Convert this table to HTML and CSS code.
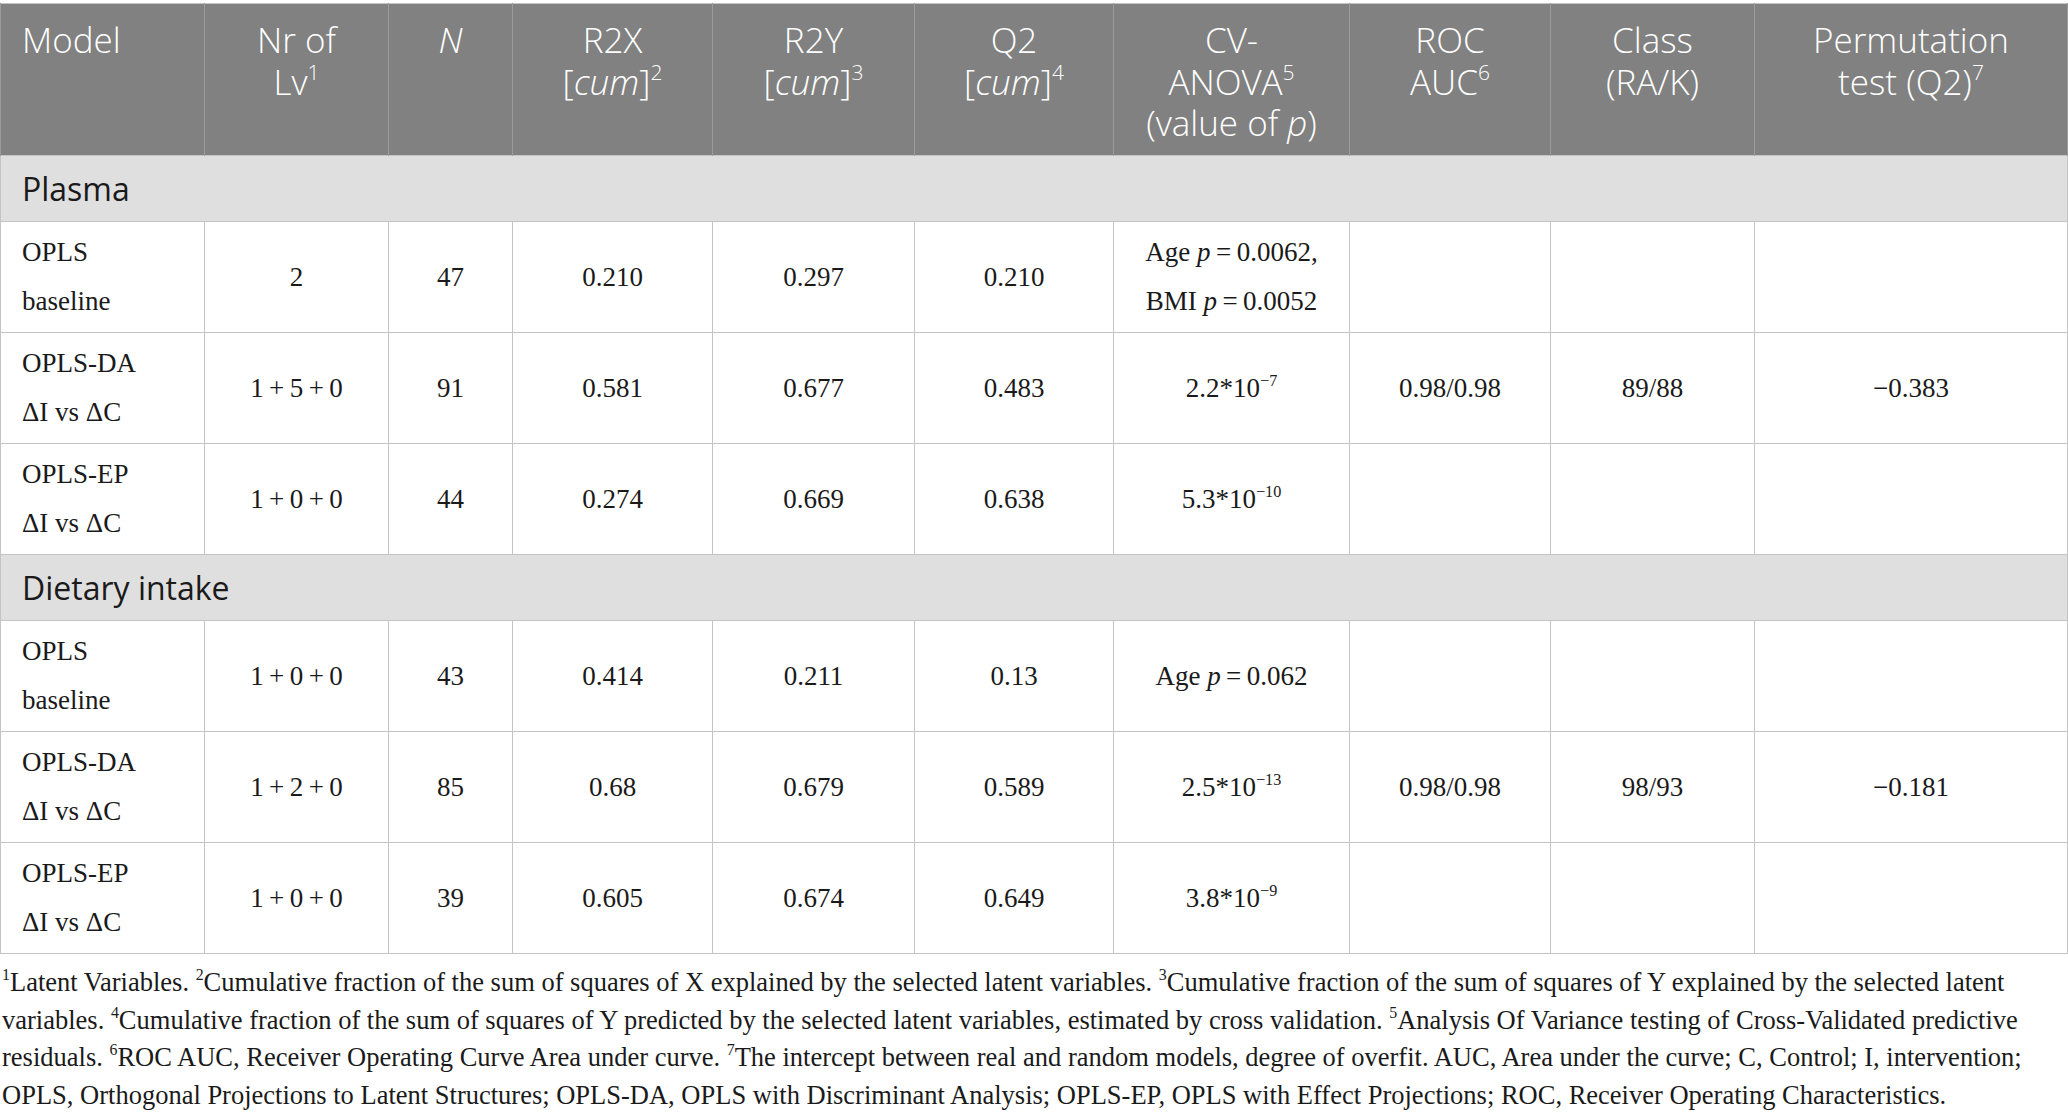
FILE: index.html
```html
<!DOCTYPE html>
<html lang="en">
<head>
<meta charset="utf-8">
<title>OPLS models</title>
<link rel="stylesheet" href="styles.css">
</head>
<body>
<table class="tbl">
  <colgroup>
    <col class="c1"><col class="c2"><col class="c3"><col class="c4"><col class="c5">
    <col class="c6"><col class="c7"><col class="c8"><col class="c9"><col class="c10">
  </colgroup>
  <thead>
    <tr class="head">
      <th class="left">Model</th>
      <th>Nr of<br>Lv<sup>1</sup></th>
      <th><i>N</i></th>
      <th>R2X<br>[<i>cum</i>]<sup>2</sup></th>
      <th>R2Y<br>[<i>cum</i>]<sup>3</sup></th>
      <th>Q2<br>[<i>cum</i>]<sup>4</sup></th>
      <th>CV-<br>ANOVA<sup>5</sup><br>(value of <i>p</i>)</th>
      <th>ROC<br>AUC<sup>6</sup></th>
      <th>Class<br>(RA/K)</th>
      <th>Permutation<br>test (Q2)<sup>7</sup></th>
    </tr>
  </thead>
  <tbody>
    <tr class="section"><td colspan="10">Plasma</td></tr>
    <tr class="row">
      <td class="left">OPLS<br>baseline</td>
      <td>2</td><td>47</td><td>0.210</td><td>0.297</td><td>0.210</td>
      <td>Age <i>p</i>&#8201;=&#8201;0.0062,<br>BMI <i>p</i>&#8201;=&#8201;0.0052</td>
      <td></td><td></td><td></td>
    </tr>
    <tr class="row">
      <td class="left">OPLS-DA<br>ΔI vs ΔC</td>
      <td>1&#8201;+&#8201;5&#8201;+&#8201;0</td><td>91</td><td>0.581</td><td>0.677</td><td>0.483</td>
      <td>2.2*10<sup>−7</sup></td>
      <td>0.98/0.98</td><td>89/88</td><td>−0.383</td>
    </tr>
    <tr class="row">
      <td class="left">OPLS-EP<br>ΔI vs ΔC</td>
      <td>1&#8201;+&#8201;0&#8201;+&#8201;0</td><td>44</td><td>0.274</td><td>0.669</td><td>0.638</td>
      <td>5.3*10<sup>−10</sup></td>
      <td></td><td></td><td></td>
    </tr>
    <tr class="section"><td colspan="10">Dietary intake</td></tr>
    <tr class="row">
      <td class="left">OPLS<br>baseline</td>
      <td>1&#8201;+&#8201;0&#8201;+&#8201;0</td><td>43</td><td>0.414</td><td>0.211</td><td>0.13</td>
      <td>Age <i>p</i>&#8201;=&#8201;0.062</td>
      <td></td><td></td><td></td>
    </tr>
    <tr class="row">
      <td class="left">OPLS-DA<br>ΔI vs ΔC</td>
      <td>1&#8201;+&#8201;2&#8201;+&#8201;0</td><td>85</td><td>0.68</td><td>0.679</td><td>0.589</td>
      <td>2.5*10<sup>−13</sup></td>
      <td>0.98/0.98</td><td>98/93</td><td>−0.181</td>
    </tr>
    <tr class="row">
      <td class="left">OPLS-EP<br>ΔI vs ΔC</td>
      <td>1&#8201;+&#8201;0&#8201;+&#8201;0</td><td>39</td><td>0.605</td><td>0.674</td><td>0.649</td>
      <td>3.8*10<sup>−9</sup></td>
      <td></td><td></td><td></td>
    </tr>
  </tbody>
</table>
<p class="notes"><sup>1</sup>Latent Variables. <sup>2</sup>Cumulative fraction of the sum of squares of X explained by the selected latent variables. <sup>3</sup>Cumulative fraction of the sum of squares of Y explained by the selected latent<br>variables. <sup>4</sup>Cumulative fraction of the sum of squares of Y predicted by the selected latent variables, estimated by cross validation. <sup>5</sup>Analysis Of Variance testing of Cross-Validated predictive<br>residuals. <sup>6</sup>ROC AUC, Receiver Operating Curve Area under curve. <sup>7</sup>The intercept between real and random models, degree of overfit. AUC, Area under the curve; C, Control; I, intervention;<br>OPLS, Orthogonal Projections to Latent Structures; OPLS-DA, OPLS with Discriminant Analysis; OPLS-EP, OPLS with Effect Projections; ROC, Receiver Operating Characteristics.</p>
</body>
</html>
```
FILE: styles.css
```css
html, body {
  margin: 0;
  padding: 0;
  background: #ffffff;
}
body {
  padding-top: 3px;
}
.tbl {
  width: 2067px;
  border-collapse: collapse;
  table-layout: fixed;
  border: 1px solid #c4c4c4;
}
.c1 { width: 204px; }
.c2 { width: 184px; }
.c3 { width: 124px; }
.c4 { width: 200px; }
.c5 { width: 202px; }
.c6 { width: 199px; }
.c7 { width: 236px; }
.c8 { width: 201px; }
.c9 { width: 204px; }
.c10 { width: 313px; }

.head th {
  background: #808180;
  color: #ffffff;
  font-family: "Open Sans", "Noto Sans", sans-serif;
  font-weight: 300;
  font-size: 35px;
  line-height: 41.5px;
  text-align: center;
  vertical-align: top;
  height: 152px;
  box-sizing: border-box;
  padding: 15px 6px 0;
  border-left: 1px solid #9a9a9a;
  border-right: 1px solid #9a9a9a;
}
.head th.left {
  text-align: left;
  padding-left: 21px;
}
.head sup {
  font-size: 0.6em;
  line-height: 0;
  vertical-align: 0.7em;
}
.head i {
  font-style: italic;
}

.section td {
  background: #e0dfdf;
  color: #1a1a1a;
  font-family: "Open Sans", "Noto Sans", sans-serif;
  font-size: 32px;
  height: 66px;
  box-sizing: border-box;
  padding: 0 21px;
  vertical-align: middle;
  border-top: 1px solid #c4c4c4;
  border-bottom: 1px solid #c4c4c4;
}

.row td {
  font-family: "Liberation Serif", "Times New Roman", serif;
  font-size: 27px;
  line-height: 49px;
  color: #1a1a1a;
  text-align: center;
  vertical-align: middle;
  height: 111px;
  box-sizing: border-box;
  padding: 0 8px;
  border: 1px solid #c4c4c4;
}
.row td.left {
  text-align: left;
  padding-left: 21px;
}
.row sup {
  font-size: 0.6em;
  line-height: 0;
  vertical-align: 0.7em;
}

.notes {
  margin: 10px 0 0;
  padding: 0 2px;
  font-family: "Liberation Serif", "Times New Roman", serif;
  font-size: 26.5px;
  line-height: 37.5px;
  color: #1a1a1a;
}
.notes sup {
  font-size: 0.6em;
  line-height: 0;
  vertical-align: 0.7em;
}
```
